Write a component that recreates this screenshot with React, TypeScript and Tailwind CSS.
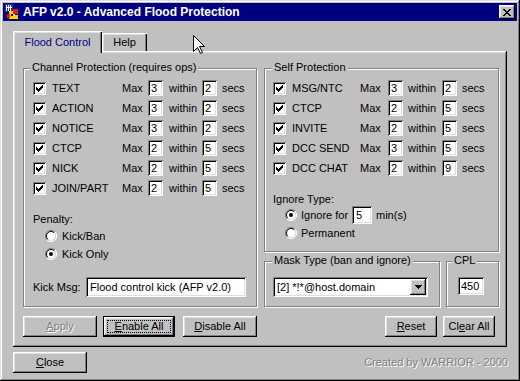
import type { ReactNode } from 'react'

// Win98-style bevels
const raised = 'shadow-[inset_-1px_-1px_#000,inset_1px_1px_#fff,inset_-2px_-2px_#808080,inset_2px_2px_#dfdfdf]'
const sunken = 'shadow-[inset_1px_1px_#808080,inset_-1px_-1px_#fff,inset_2px_2px_#000,inset_-2px_-2px_#dfdfdf]'
const etched = 'border border-[#808080] shadow-[inset_1px_1px_#fff,1px_1px_#fff]'
const embossed = 'text-[#808080] [text-shadow:1px_1px_0_#fff]'

const channelRows: [string, number, number][] = [
  ['TEXT', 3, 2],
  ['ACTION', 3, 2],
  ['NOTICE', 3, 2],
  ['CTCP', 2, 5],
  ['NICK', 2, 5],
  ['JOIN/PART', 2, 5],
]

const selfRows: [string, number, number][] = [
  ['MSG/NTC', 3, 2],
  ['CTCP', 2, 5],
  ['INVITE', 2, 5],
  ['DCC SEND', 3, 5],
  ['DCC CHAT', 2, 9],
]

const checkCols = [2, 3, 4, 3, 2, 1, 0]

function Check() {
  return (
    <span className={`relative block w-[13px] h-[13px] shrink-0 bg-white ${sunken}`}>
      <svg className="absolute left-[3px] top-[3px]" width="7" height="7" shapeRendering="crispEdges">
        {checkCols.map((top, i) => (
          <rect key={i} x={i} y={top} width="1" height="3" fill="#000" />
        ))}
      </svg>
    </span>
  )
}

function Radio({ on }: { on?: boolean }) {
  return (
    <span className="relative block w-[12px] h-[12px] shrink-0">
      <svg width="12" height="12" viewBox="0 0 12 12">
        <path d="M10 2 A5.5 5.5 0 0 0 2 10" stroke="#808080" strokeWidth="1" fill="none" />
        <path d="M2 10 A5.5 5.5 0 0 0 10 2" stroke="#fff" strokeWidth="1" fill="none" />
        <circle cx="6" cy="6" r="4.5" fill="#fff" />
        <path d="M9.2 2.8 A4.5 4.5 0 0 0 2.8 9.2" stroke="#000" strokeWidth="1" fill="none" />
        <path d="M2.8 9.2 A4.5 4.5 0 0 0 9.2 2.8" stroke="#dfdfdf" strokeWidth="1" fill="none" />
        {on && <circle cx="6" cy="6" r="2" fill="#000" />}
      </svg>
    </span>
  )
}

function Num({ v }: { v: number }) {
  return (
    <span className={`flex items-center w-[15px] h-[16px] shrink-0 bg-white pl-[3px] ${sunken}`}>{v}</span>
  )
}

function Group({ title, titleClass, className, children }: { title: string; titleClass: string; className: string; children: ReactNode }) {
  return (
    <div className={`relative ${etched} ${className}`}>
      <span className={`absolute -top-[8px] px-[2px] bg-[#c0c0c0] leading-[13px] ${titleClass}`}>{title}</span>
      {children}
    </div>
  )
}

function Btn({ w, children, disabled, def }: { w: string; children: ReactNode; disabled?: boolean; def?: boolean }) {
  if (def) {
    return (
      <div className={`${w} h-[21px] border border-black`}>
        <div className={`h-full p-[3px] ${raised}`}>
          <div className="h-full flex items-center justify-center border border-dotted border-black">{children}</div>
        </div>
      </div>
    )
  }
  return (
    <div className={`${w} h-[21px] flex items-center justify-center ${raised} ${disabled ? embossed : ''}`}>
      {children}
    </div>
  )
}

function TitleIcon() {
  return (
    <svg width="16" height="16" viewBox="0 0 16 16" shapeRendering="crispEdges">
      <rect x="1" y="0" width="8" height="8" fill="#2030a0" />
      <rect x="2" y="1" width="1" height="6" fill="#fff" />
      <rect x="4" y="1" width="1" height="6" fill="#fff" />
      <rect x="6" y="1" width="1" height="6" fill="#fff" />
      <rect x="2" y="3" width="6" height="1" fill="#fff" />
      <rect x="5" y="7" width="6" height="8" fill="#ffd800" />
      <rect x="9" y="5" width="5" height="5" fill="#e02020" />
      <rect x="3" y="10" width="3" height="4" fill="#e02020" />
      <rect x="7" y="10" width="2" height="2" fill="#000" />
      <rect x="11" y="11" width="3" height="4" fill="#ffd800" />
    </svg>
  )
}

export default function App() {
  return (
    <div
      className={`relative w-[520px] h-[381px] p-[3px] bg-[#c0c0c0] text-[11px] text-black font-['Liberation_Sans',Arial,sans-serif] shadow-[inset_-1px_-1px_#000,inset_1px_1px_#dfdfdf,inset_-2px_-2px_#808080,inset_2px_2px_#fff]`}
    >
      {/* title bar */}
      <div className="h-[18px] flex items-center bg-[#000080]">
        <span className="ml-[1px]"><TitleIcon /></span>
        <span className="ml-[3px] text-white font-bold text-[12px] leading-none">AFP v2.0 - Advanced Flood Protection</span>
        <div className={`ml-auto mr-[2px] w-[16px] h-[14px] bg-[#c0c0c0] flex items-center justify-center ${raised}`}>
          <svg width="8" height="7" shapeRendering="crispEdges">
            <path d="M0 0h2v1h-2zM6 0h2v1h-2zM1 1h2v1h-2zM5 1h2v1h-2zM2 2h4v1h-4zM3 3h2v1h-2zM2 4h4v1h-4zM1 5h2v1h-2zM5 5h2v1h-2zM0 6h2v1h-2zM6 6h2v1h-2z" fill="#000" />
          </svg>
        </div>
      </div>

      {/* tabs */}
      <div className="ml-[10px] mt-[10px] h-[20px] flex items-end relative z-10">
        <div className="w-[89px] h-[22px] -mb-[2px] bg-[#c0c0c0] flex items-center justify-center text-[#000080] shadow-[inset_1px_1px_#fff,inset_-1px_0_#000,inset_-2px_0_#808080,inset_2px_2px_#dfdfdf]">
          Flood Control
        </div>
        <div className="w-[45px] h-[18px] flex items-center justify-center shadow-[inset_1px_1px_#fff,inset_-1px_0_#000,inset_-2px_0_#808080,inset_2px_2px_#dfdfdf]">
          Help
        </div>
      </div>

      {/* tab panel */}
      <div className={`ml-[10px] w-[494px] h-[296px] pl-[10px] pt-[17px] ${raised}`}>
        <div className="flex gap-[7px]">
          <Group title="Channel Protection (requires ops)" titleClass="left-[6px]" className="w-[234px] h-[239px] pt-[9px]">
            {channelRows.map(([label, max, secs]) => (
              <div key={label} className="h-[20px] flex items-center pl-[9px]">
                <Check />
                <span className="ml-[6px] w-[70px]">{label}</span>
                <span className="w-[26px]">Max</span>
                <Num v={max} />
                <span className="pl-[6px] w-[39px]">within</span>
                <Num v={secs} />
                <span className="pl-[5px]">secs</span>
              </div>
            ))}
            <div className="mt-[13px] h-[16px] flex items-center pl-[9px]">Penalty:</div>
            <div className="h-[18px] flex items-center pl-[21px]">
              <Radio />
              <span className="ml-[5px]">Kick/Ban</span>
            </div>
            <div className="h-[18px] flex items-center pl-[21px]">
              <Radio on />
              <span className="ml-[5px]">Kick Only</span>
            </div>
            <div className="mt-[14px] flex items-center pl-[9px]">
              <span className="w-[53px]">Kick Msg:</span>
              <span className={`w-[160px] h-[20px] flex items-center pl-[4px] bg-white ${sunken}`}>Flood control kick (AFP v2.0)</span>
            </div>
          </Group>

          <div className="w-[235px]">
            <Group title="Self Protection" titleClass="left-[7px]" className="h-[184px] pt-[9px]">
              {selfRows.map(([label, max, secs]) => (
                <div key={label} className="h-[20px] flex items-center pl-[8px]">
                  <Check />
                  <span className="ml-[6px] w-[68px]">{label}</span>
                  <span className="w-[28px]">Max</span>
                  <Num v={max} />
                  <span className="pl-[5px] w-[39px]">within</span>
                  <Num v={secs} />
                  <span className="pl-[5px]">secs</span>
                </div>
              ))}
              <div className="mt-[14px] h-[14px] flex items-center pl-[8px]">Ignore Type:</div>
              <div className="h-[18px] flex items-center pl-[20px]">
                <Radio on />
                <span className="ml-[4px] w-[51px]">Ignore for</span>
                <span className={`w-[20px] h-[18px] flex items-center pl-[4px] bg-white ${sunken}`}>5</span>
                <span className="ml-[4px]">min(s)</span>
              </div>
              <div className="h-[18px] flex items-center pl-[20px]">
                <Radio />
                <span className="ml-[4px]">Permanent</span>
              </div>
            </Group>

            <div className="mt-[9px] flex gap-[6px]">
              <Group title="Mask Type (ban and ignore)" titleClass="left-[7px]" className="w-[176px] h-[46px] pt-[15px] pl-[8px]">
                <div className={`w-[155px] h-[20px] flex items-center pl-[4px] pr-[2px] bg-white ${sunken}`}>
                  <span className="flex-1">[2] *!*@host.domain</span>
                  <span className={`w-[16px] h-[16px] flex items-center justify-center bg-[#c0c0c0] ${raised}`}>
                    <svg width="7" height="4" shapeRendering="crispEdges">
                      <path d="M0 0h7v1h-7zM1 1h5v1h-5zM2 2h3v1h-3zM3 3h1v1h-1z" fill="#000" />
                    </svg>
                  </span>
                </div>
              </Group>
              <Group title="CPL" titleClass="left-[5px]" className="w-[53px] h-[46px] pt-[15px] pl-[11px]">
                <span className={`w-[26px] h-[18px] flex items-center pl-[3px] bg-white ${sunken}`}>450</span>
              </Group>
            </div>
          </div>
        </div>

        {/* panel buttons */}
        <div className="mt-[9px] flex items-center pr-[10px]">
          <Btn w="w-[74px]" disabled>
            <span><u>A</u>pply</span>
          </Btn>
          <div className="ml-[6px]">
            <Btn w="w-[72px]" def>
              <span><u>E</u>nable All</span>
            </Btn>
          </div>
          <div className="ml-[8px]">
            <Btn w="w-[74px]">
              <span><u>D</u>isable All</span>
            </Btn>
          </div>
          <div className="ml-auto flex gap-[6px] mr-[2px]">
            <Btn w="w-[52px]">
              <span><u>R</u>eset</span>
            </Btn>
            <Btn w="w-[52px]">
              <span>Cl<u>e</u>ar All</span>
            </Btn>
          </div>
        </div>
      </div>

      {/* footer */}
      <div className="mt-[5px] ml-[10px] mr-[9px] flex items-center justify-between">
        <Btn w="w-[74px]">
          <span><u>C</u>lose</span>
        </Btn>
        <span className={embossed}>Created by WARRIOR - 2000</span>
      </div>

      {/* mouse pointer captured in the screenshot */}
      <svg className="absolute left-[193px] top-[35px]" width="13" height="20" viewBox="0 0 13 20">
        <path d="M0.5 0.5 L0.5 16.5 L4.5 12.5 L7.5 18.5 L9.5 17.5 L6.5 11.5 L11.5 11.5 Z" fill="#fff" stroke="#000" strokeWidth="1" />
      </svg>
    </div>
  )
}
